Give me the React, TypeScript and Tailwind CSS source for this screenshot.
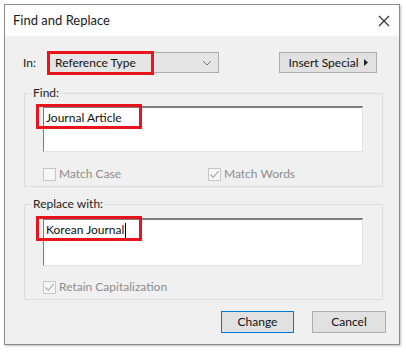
import React from "react";

const font = { fontFamily: 'Lato, "Noto Sans", sans-serif' };

function Box({ checked, label }: { checked?: boolean; label: string }) {
  return (
    <div className="flex items-center gap-[3px] text-[12px] text-[#8d8d8d]">
      <div className="w-[13px] h-[13px] border border-[#c7c7c7] bg-[#f7f7f7] flex items-center justify-center">
        {checked && (
          <svg width="11" height="11" viewBox="0 0 11 11">
            <path d="M1.5 5.5 L4.2 8.3 L9.6 2.2" fill="none" stroke="#a3a3a3" strokeWidth="1.1" />
          </svg>
        )}
      </div>
      <span>{label}</span>
    </div>
  );
}

function TextField({ value, caret, height }: { value: string; caret?: boolean; height: string }) {
  return (
    <div className={`relative ml-[18px] w-[320px] ${height} bg-white border border-[#e2e2e2] border-t-[#7d7d7d] border-l-[#7d7d7d] border-t-2`}>
      <div className="pl-[2px] pt-[2px] text-[12px] text-[#111] leading-[16px] flex items-center">
        {value}
        {caret && <span className="inline-block w-[1px] h-[15px] bg-black ml-[1px]" />}
      </div>
      <div className="absolute left-[-8px] top-[-4px] w-[106px] h-[25px] border-[3px] border-[#e8141b]" />
    </div>
  );
}

export default function App() {
  return (
    <div className="w-[406px] h-[356px] bg-white pl-[4px] pt-[4px]" style={font}>
      <div className="w-[396px] h-[341px] border border-[#8c8c8c] shadow-[1px_1px_2px_rgba(0,0,0,0.25)] flex flex-col">
        <div className="h-[31px] bg-white flex items-center justify-between pl-[8px] pr-[9px]">
          <span className="text-[13px] text-[#1a1a1a]">Find and Replace</span>
          <svg width="12" height="12" viewBox="0 0 12 12">
            <path d="M1 1 L11 11 M11 1 L1 11" stroke="#333" strokeWidth="1.2" />
          </svg>
        </div>
        <div className="flex-1 bg-[#f0f0f0] flex flex-col">
          <div className="mt-[16px] flex items-center h-[21px]">
            <span className="ml-[18px] w-[25px] text-[12px] text-[#222]">In:</span>
            <div className="relative w-[171px] h-[21px] bg-[#e5e5e5] border border-[#adadad] flex items-center justify-between pl-[6px] pr-[6px]">
              <span className="text-[12px] text-[#111]">Reference Type</span>
              <svg width="10" height="6" viewBox="0 0 10 6">
                <path d="M1 1 L5 5 L9 1" fill="none" stroke="#777" strokeWidth="1" />
              </svg>
              <div className="absolute left-[-2px] top-[-2px] w-[107px] h-[24px] border-[3px] border-[#e8141b]" />
            </div>
            <div className="ml-[60px] w-[98px] h-[21px] bg-[#e1e1e1] border border-[#adadad] flex items-center justify-center gap-[5px] text-[12px] text-[#111]">
              Insert Special
              <svg width="4" height="7" viewBox="0 0 4 7">
                <path d="M0 0 L4 3.5 L0 7 Z" fill="#222" />
              </svg>
            </div>
          </div>

          <fieldset className="mt-[13px] ml-[19px] w-[359px] h-[101px] border border-[#dcdcdc]">
            <legend className="ml-[7px] px-[1px] text-[12px] text-[#222] leading-[14px]">Find:</legend>
            <div className="mt-[6px]">
              <TextField value="Journal Article" height="h-[46px]" />
            </div>
            <div className="mt-[13px] ml-[18px] flex">
              <div className="w-[165px]">
                <Box label="Match Case" />
              </div>
              <Box checked label="Match Words" />
            </div>
          </fieldset>

          <fieldset className="mt-[10px] ml-[19px] w-[359px] h-[103px] border border-[#dcdcdc]">
            <legend className="ml-[7px] px-[1px] text-[12px] text-[#222] leading-[14px]">Replace with:</legend>
            <div className="mt-[7px]">
              <TextField value="Korean Journal" caret height="h-[48px]" />
            </div>
            <div className="mt-[12px] ml-[18px] flex">
              <Box checked label="Retain Capitalization" />
            </div>
          </fieldset>

          <div className="mt-[11px] flex justify-end pr-[13px] gap-[18px]">
            <div className="w-[73px] h-[22px] bg-[#e1e1e1] border border-[#0078d7] flex items-center justify-center text-[12px] text-[#111]">
              Change
            </div>
            <div className="w-[74px] h-[22px] bg-[#e1e1e1] border border-[#adadad] flex items-center justify-center text-[12px] text-[#111]">
              Cancel
            </div>
          </div>
        </div>
      </div>
    </div>
  );
}
